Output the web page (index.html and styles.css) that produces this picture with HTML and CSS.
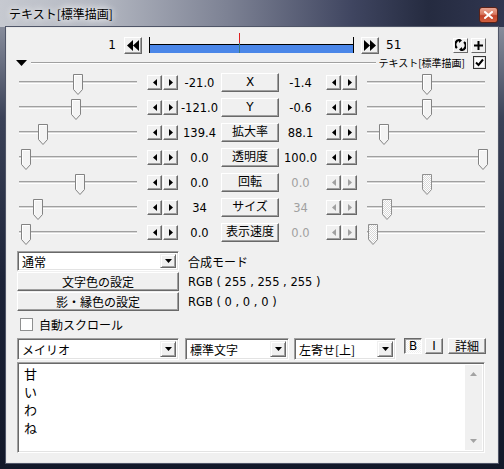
FILE: index.html
```html
<!DOCTYPE html>
<html lang="ja">
<head>
<meta charset="utf-8">
<title>テキスト[標準描画]</title>
<link rel="stylesheet" href="styles.css">
</head>
<body>
<div class="window">
  <div class="titlebar">
    <span class="title">テキスト[標準描画]</span>
    <span class="close">
      <svg width="9" height="8" viewBox="0 0 9 8"><path d="M1 1 L8 7 M8 1 L1 7" stroke="#fff" stroke-width="2" stroke-linecap="square"/></svg>
    </span>
  </div>
  <div class="client">
    <div class="timeline-row">
      <span class="fnum start">1</span>
      <span class="tbtn">
        <svg width="12" height="11" viewBox="0 0 12 11"><path d="M6 0 L0 5.5 L6 11 Z M12 0 L6 5.5 L12 11 Z" fill="#000"/></svg>
      </span>
      <div class="timeline">
        <div class="tl-bar"></div>
        <div class="tl-cursor" style="left:89px"></div>
      </div>
      <span class="tbtn">
        <svg width="12" height="11" viewBox="0 0 12 11"><path d="M0 0 L6 5.5 L0 11 Z M6 0 L12 5.5 L6 11 Z" fill="#000"/></svg>
      </span>
      <span class="fnum end">51</span>
      <span class="grow"></span>
      <span class="ibtn">
        <svg width="11" height="12" viewBox="0 0 11 12"><path d="M5 1 A4.5 4.5 0 0 0 2 9" stroke="#000" stroke-width="2.2" fill="none"/><path d="M6 11 A4.5 4.5 0 0 0 9 3" stroke="#000" stroke-width="2.2" fill="none"/><path d="M4 -1 L7 1.5 L4 4 Z" fill="#000"/><path d="M7 13 L4 10.5 L7 8 Z" fill="#000"/></svg>
      </span>
      <span class="ibtn">
        <svg width="11" height="11" viewBox="0 0 11 11"><path d="M5.5 1 V10 M1 5.5 H10" stroke="#000" stroke-width="2"/></svg>
      </span>
    </div>

    <div class="header-row">
      <svg class="tri" width="11" height="6" viewBox="0 0 11 6"><path d="M0 0 H11 L5.5 6 Z" fill="#000"/></svg>
      <span class="hline"></span>
      <span class="objname">テキスト[標準描画]</span>
      <span class="check on">
        <svg width="9" height="9" viewBox="0 0 9 9"><path d="M1 4.5 L3.5 7 L8 1.5" stroke="#000" stroke-width="2" fill="none"/></svg>
      </span>
    </div>

    <div class="params">
      <div class="prow">
        <div class="slider"><span class="track"></span><span class="thumb" style="left:60px"></span></div>
        <div class="spin"><span class="sbtn l"></span><span class="sbtn r"></span></div>
        <span class="val">-21.0</span>
        <span class="pbtn">X</span>
        <span class="val">-1.4</span>
        <div class="spin"><span class="sbtn l"></span><span class="sbtn r"></span></div>
        <div class="slider"><span class="track"></span><span class="thumb" style="left:61px"></span></div>
      </div>
      <div class="prow">
        <div class="slider"><span class="track"></span><span class="thumb" style="left:58px"></span></div>
        <div class="spin"><span class="sbtn l"></span><span class="sbtn r"></span></div>
        <span class="val">-121.0</span>
        <span class="pbtn">Y</span>
        <span class="val">-0.6</span>
        <div class="spin"><span class="sbtn l"></span><span class="sbtn r"></span></div>
        <div class="slider"><span class="track"></span><span class="thumb" style="left:61px"></span></div>
      </div>
      <div class="prow">
        <div class="slider"><span class="track"></span><span class="thumb" style="left:25px"></span></div>
        <div class="spin"><span class="sbtn l"></span><span class="sbtn r"></span></div>
        <span class="val">139.4</span>
        <span class="pbtn">拡大率</span>
        <span class="val">88.1</span>
        <div class="spin"><span class="sbtn l"></span><span class="sbtn r"></span></div>
        <div class="slider"><span class="track"></span><span class="thumb" style="left:18px"></span></div>
      </div>
      <div class="prow">
        <div class="slider"><span class="track"></span><span class="thumb" style="left:8px"></span></div>
        <div class="spin"><span class="sbtn l"></span><span class="sbtn r"></span></div>
        <span class="val">0.0</span>
        <span class="pbtn">透明度</span>
        <span class="val">100.0</span>
        <div class="spin"><span class="sbtn l"></span><span class="sbtn r"></span></div>
        <div class="slider"><span class="track"></span><span class="thumb" style="left:117px"></span></div>
      </div>
      <div class="prow">
        <div class="slider"><span class="track"></span><span class="thumb" style="left:62px"></span></div>
        <div class="spin"><span class="sbtn l"></span><span class="sbtn r"></span></div>
        <span class="val">0.0</span>
        <span class="pbtn">回転</span>
        <span class="val dis">0.0</span>
        <div class="spin dis"><span class="sbtn l"></span><span class="sbtn r"></span></div>
        <div class="slider dis"><span class="track"></span><span class="thumb" style="left:61px"></span></div>
      </div>
      <div class="prow">
        <div class="slider"><span class="track"></span><span class="thumb" style="left:20px"></span></div>
        <div class="spin"><span class="sbtn l"></span><span class="sbtn r"></span></div>
        <span class="val">34</span>
        <span class="pbtn">サイズ</span>
        <span class="val dis">34</span>
        <div class="spin dis"><span class="sbtn l"></span><span class="sbtn r"></span></div>
        <div class="slider dis"><span class="track"></span><span class="thumb" style="left:21px"></span></div>
      </div>
      <div class="prow">
        <div class="slider"><span class="track"></span><span class="thumb" style="left:8px"></span></div>
        <div class="spin"><span class="sbtn l"></span><span class="sbtn r"></span></div>
        <span class="val">0.0</span>
        <span class="pbtn">表示速度</span>
        <span class="val dis">0.0</span>
        <div class="spin dis"><span class="sbtn l"></span><span class="sbtn r"></span></div>
        <div class="slider dis"><span class="track"></span><span class="thumb" style="left:7px"></span></div>
      </div>
    </div>

    <div class="lower">
      <div class="lrow r-blend">
        <div class="combo w162"><span class="ctext">通常</span><span class="carrow"></span></div>
        <span class="label jp">合成モード</span>
      </div>
      <div class="lrow r-color">
        <span class="wbtn">文字色の設定</span>
        <span class="label">RGB ( 255 , 255 , 255 )</span>
      </div>
      <div class="lrow r-color">
        <span class="wbtn">影・縁色の設定</span>
        <span class="label">RGB ( 0 , 0 , 0 )</span>
      </div>
      <div class="lrow r-auto">
        <span class="check"></span>
        <span class="label jp">自動スクロール</span>
      </div>
      <div class="lrow r-font">
        <div class="combo big w162"><span class="ctext">メイリオ</span><span class="carrow"></span></div>
        <div class="combo big w104"><span class="ctext">標準文字</span><span class="carrow"></span></div>
        <div class="combo big w102"><span class="ctext">左寄せ[上]</span><span class="carrow"></span></div>
        <span class="sq pressed">B</span>
        <span class="sq">I</span>
        <span class="sq wide">詳細</span>
      </div>
      <div class="textbox">
        <div class="tlines">
          <div>甘</div>
          <div>い</div>
          <div>わ</div>
          <div>ね</div>
        </div>
        <div class="vscroll">
          <svg width="7" height="4" viewBox="0 0 7 4"><path d="M0 4 L3.5 0 L7 4 Z" fill="#a3a3a3"/></svg>
          <svg width="7" height="4" viewBox="0 0 7 4"><path d="M0 0 L3.5 4 L7 0 Z" fill="#a3a3a3"/></svg>
        </div>
      </div>
    </div>
  </div>
</div>
</body>
</html>
```

FILE: styles.css
```css
html, body {
  margin: 0;
  padding: 0;
}
body {
  width: 504px;
  height: 469px;
  overflow: hidden;
  font-family: "DejaVu Sans", "Noto Sans CJK JP", sans-serif;
  font-size: 11px;
  color: #000;
}
.window {
  width: 504px;
  height: 469px;
  box-sizing: border-box;
  display: flex;
  flex-direction: column;
  background: linear-gradient(to bottom, #9ea3b0 0%, #3b4258 25%, #1c2338 60%, #121829 100%);
}
.titlebar {
  height: 27px;
  flex: none;
  display: flex;
  align-items: flex-start;
  justify-content: space-between;
  background: linear-gradient(to right, #c6c9d0 0%, #b3b7c1 20%, #7d8294 45%, #3f4560 70%, #252b40 85%, #303650 100%);
}
.title {
  font-family: "Noto Sans CJK JP", sans-serif;
  font-size: 12px;
  line-height: 16px;
  margin: 6px 0 0 7px;
  padding: 0 2px;
  color: #000;
  text-shadow: 0 0 6px #fff, 0 0 10px #fff;
}
.close {
  width: 19px;
  height: 16px;
  margin: 7px 6px 0 0;
  box-sizing: border-box;
  border: 1px solid #5a2218;
  border-radius: 3px;
  background: linear-gradient(to bottom, #e9a592 0%, #d9775f 45%, #c2422a 55%, #d0603f 100%);
  display: flex;
  align-items: center;
  justify-content: center;
}
.client {
  flex: none;
  margin: 0 6px;
  height: 436px;
  box-sizing: border-box;
  border: 1px solid #e8e8e8;
  outline: 1px solid #505668;
  background: #f0f0f0;
  display: flex;
  flex-direction: column;
}

/* timeline row */
.timeline-row {
  height: 18px;
  margin-top: 8px;
  display: flex;
  align-items: center;
}
.fnum {
  font-size: 12px;
}
.fnum.start {
  width: 109px;
  text-align: right;
  margin-right: 8px;
}
.fnum.end {
  margin-left: 7px;
}
.tbtn {
  width: 18px;
  height: 17px;
  box-sizing: border-box;
  border: 1px solid;
  border-color: #fff #696969 #696969 #fff;
  box-shadow: inset -1px -1px 0 #a0a0a0;
  background: #f0f0f0;
  display: flex;
  align-items: center;
  justify-content: center;
}
.timeline {
  width: 205px;
  height: 16px;
  margin: 0 7px 0 7px;
  box-sizing: border-box;
  border-left: 1px solid #000;
  border-right: 1px solid #000;
  position: relative;
  display: flex;
  flex-direction: column;
  justify-content: flex-end;
}
.tl-bar {
  height: 8px;
  border-top: 1px solid #000;
  background: #4a86e8;
}
.tl-cursor {
  position: absolute;
  top: -4px;
  bottom: 0;
  width: 1px;
  background: linear-gradient(to bottom, #e02020 0, #e02020 10px, #3a7a80 10px);
}
.grow {
  flex: 1;
}
.ibtn {
  width: 15px;
  height: 15px;
  box-sizing: border-box;
  border: 1px solid;
  border-color: #fff #696969 #696969 #fff;
  background: #f0f0f0;
  display: flex;
  align-items: center;
  justify-content: center;
  margin-right: 3px;
}
.ibtn:last-child {
  margin-right: 11px;
}

/* header row */
.header-row {
  height: 15px;
  margin-top: 1px;
  display: flex;
  align-items: center;
}
.tri {
  margin-left: 9px;
  flex: none;
}
.hline {
  flex: 1;
  height: 0;
  border-top: 1px solid #a0a0a0;
  border-bottom: 1px solid #fff;
  margin: 0 3px 0 4px;
}
.objname {
  font-family: "Noto Sans CJK JP", sans-serif;
  font-size: 10px;
  line-height: 12px;
  margin-right: 8px;
}
.check {
  width: 13px;
  height: 13px;
  box-sizing: border-box;
  border: 1px solid #8e8f8f;
  background: #fff;
  box-shadow: inset 0 0 0 1px #e0e0e0;
  display: flex;
  align-items: center;
  justify-content: center;
  flex: none;
}
.header-row .check {
  margin-right: 11px;
  border-color: #333;
}

/* parameter rows */
.params {
  display: flex;
  flex-direction: column;
  margin-top: 0;
}
.prow {
  height: 25px;
  display: flex;
  align-items: center;
}
.slider {
  width: 130px;
  height: 25px;
  box-sizing: border-box;
  padding: 0 6px;
  display: flex;
  align-items: center;
  position: relative;
  flex: none;
}
.prow > .slider:first-child {
  margin-left: 6px;
}
.track {
  flex: 1;
  height: 1px;
  border-top: 1px solid #a0a0a0;
  border-bottom: 1px solid #fff;
  background: #d8d8d8;
}
.thumb {
  position: absolute;
  top: 4px;
  width: 10px;
  height: 21px;
  background: no-repeat url("data:image/svg+xml,%3Csvg xmlns='http://www.w3.org/2000/svg' width='10' height='21'%3E%3Cpath d='M0.5 0.5 H9.5 V15.5 L5 20.5 L0.5 15.5 Z' fill='%23f4f4f4' stroke='%23838383'/%3E%3Cpath d='M1.5 1.5 V15 M1.5 1.5 H8.5' stroke='%23fff' fill='none'/%3E%3C/svg%3E");
}
.slider.dis .thumb {
  background: no-repeat url("data:image/svg+xml,%3Csvg xmlns='http://www.w3.org/2000/svg' width='10' height='21'%3E%3Cdefs%3E%3Cpattern id='p' width='2' height='2' patternUnits='userSpaceOnUse'%3E%3Crect width='2' height='2' fill='%23fff'/%3E%3Crect width='1' height='1' fill='%23d8d8d8'/%3E%3Crect x='1' y='1' width='1' height='1' fill='%23d8d8d8'/%3E%3C/pattern%3E%3C/defs%3E%3Cpath d='M0.5 0.5 H9.5 V15.5 L5 20.5 L0.5 15.5 Z' fill='url(%23p)' stroke='%23909090'/%3E%3C/svg%3E");
}
.spin {
  display: flex;
  gap: 1px;
  margin-left: 4px;
  flex: none;
}
.sbtn {
  width: 15px;
  height: 15px;
  box-sizing: border-box;
  border: 1px solid;
  border-color: #fff #696969 #696969 #fff;
  box-shadow: inset -1px -1px 0 #a0a0a0;
  background: #f0f0f0 no-repeat center;
}
.sbtn.l {
  background-image: url("data:image/svg+xml,%3Csvg xmlns='http://www.w3.org/2000/svg' width='4' height='7'%3E%3Cpath d='M4 0 L0 3.5 L4 7 Z' fill='%23000'/%3E%3C/svg%3E");
}
.sbtn.r {
  background-image: url("data:image/svg+xml,%3Csvg xmlns='http://www.w3.org/2000/svg' width='4' height='7'%3E%3Cpath d='M0 0 L4 3.5 L0 7 Z' fill='%23000'/%3E%3C/svg%3E");
}
.spin.dis .sbtn.l {
  background-image: url("data:image/svg+xml,%3Csvg xmlns='http://www.w3.org/2000/svg' width='4' height='7'%3E%3Cpath d='M4 0 L0 3.5 L4 7 Z' fill='%23a0a0a0'/%3E%3C/svg%3E");
}
.spin.dis .sbtn.r {
  background-image: url("data:image/svg+xml,%3Csvg xmlns='http://www.w3.org/2000/svg' width='4' height='7'%3E%3Cpath d='M0 0 L4 3.5 L0 7 Z' fill='%23a0a0a0'/%3E%3C/svg%3E");
}
.val {
  width: 43px;
  text-align: center;
  font-size: 11.5px;
  flex: none;
}
.val.dis {
  color: #a0a0a0;
}
.pbtn {
  width: 58px;
  height: 19px;
  box-sizing: border-box;
  border: 1px solid;
  border-color: #fff #696969 #696969 #fff;
  box-shadow: inset -1px -1px 0 #a0a0a0;
  background: #f0f0f0;
  font-family: "DejaVu Sans", "Noto Sans CJK JP", sans-serif;
  font-size: 12px;
  line-height: 17px;
  text-align: center;
  flex: none;
}
.prow > .val:nth-of-type(2) {
  width: 42px;
}
.prow > .slider:last-child {
  margin-left: 4px;
}

/* lower section */
.lower {
  display: flex;
  flex-direction: column;
  margin-top: 6px;
  padding-left: 10px;
  font-family: "Noto Sans CJK JP", sans-serif;
}
.lrow {
  display: flex;
  align-items: center;
}
.label {
  font-size: 11.5px;
  margin-left: 9px;
  font-family: "DejaVu Sans", "Noto Sans CJK JP", sans-serif;
}
.label.jp {
  font-family: "Noto Sans CJK JP", sans-serif;
  font-size: 12px;
}
.r-blend {
  height: 20px;
}
.r-color {
  height: 19px;
  margin-top: 1px;
}
.combo {
  height: 20px;
  box-sizing: border-box;
  border: 1px solid;
  border-color: #a0a0a0 #fff #fff #a0a0a0;
  box-shadow: inset 1px 1px 0 #696969, inset -1px -1px 0 #e3e3e3;
  background: #fff;
  display: flex;
  align-items: center;
  padding: 2px;
  flex: none;
}
.combo.big {
  height: 22px;
}
.w162 { width: 162px; }
.w104 { width: 104px; }
.w102 { width: 102px; }
.ctext {
  flex: 1;
  font-size: 12px;
  padding-left: 2px;
  white-space: nowrap;
}
.carrow {
  width: 16px;
  align-self: stretch;
  box-sizing: border-box;
  border: 1px solid;
  border-color: #f0f0f0 #696969 #696969 #f0f0f0;
  box-shadow: inset 1px 1px 0 #fff, inset -1px -1px 0 #a0a0a0;
  background: #f0f0f0 no-repeat center url("data:image/svg+xml,%3Csvg xmlns='http://www.w3.org/2000/svg' width='7' height='4'%3E%3Cpath d='M0 0 H7 L3.5 4 Z' fill='%23000'/%3E%3C/svg%3E");
}
.wbtn {
  width: 162px;
  height: 19px;
  box-sizing: border-box;
  border: 1px solid;
  border-color: #fff #696969 #696969 #fff;
  box-shadow: inset -1px -1px 0 #a0a0a0;
  background: #f0f0f0;
  font-size: 12px;
  line-height: 17px;
  text-align: center;
  flex: none;
}
.r-auto {
  height: 18px;
  margin-top: 4px;
  padding-left: 3px;
}
.r-auto .label {
  margin-left: 6px;
}
.r-auto .check {
  border-color: #8e8f8f;
  box-shadow: none;
}
.r-font {
  height: 22px;
  margin-top: 5px;
  gap: 0;
}
.r-font .combo + .combo {
  margin-left: 6px;
}
.r-font .combo:nth-child(3) {
  margin-left: 5px;
}
.sq {
  width: 18px;
  height: 16px;
  box-sizing: border-box;
  border: 1px solid;
  border-color: #fff #696969 #696969 #fff;
  box-shadow: inset -1px -1px 0 #a0a0a0;
  background: #f0f0f0;
  font-family: "DejaVu Sans", "Noto Sans CJK JP", sans-serif;
  font-size: 12px;
  line-height: 14px;
  text-align: center;
  margin-left: 3px;
  align-self: flex-start;
  flex: none;
}
.sq.pressed {
  margin-left: 8px;
  border-color: #696969 #fff #fff #696969;
  box-shadow: inset 1px 1px 0 #a0a0a0;
  background: repeating-conic-gradient(#fff 0 25%, #f0f0f0 0 50%) 0 0 / 2px 2px;
}
.sq.wide {
  width: 38px;
  margin-left: 5px;
  font-family: "Noto Sans CJK JP", sans-serif;
}
.textbox {
  width: 468px;
  height: 91px;
  margin-top: 2px;
  box-sizing: border-box;
  border: 1px solid;
  border-color: #a0a0a0 #fff #fff #a0a0a0;
  box-shadow: inset 1px 1px 0 #696969, inset -1px -1px 0 #e3e3e3;
  background: #fff;
  display: flex;
  padding: 2px;
}
.tlines {
  flex: 1;
  padding: 0 0 0 4px;
  font-size: 13px;
  line-height: 18px;
}
.vscroll {
  width: 17px;
  background: #f0f0f0;
  display: flex;
  flex-direction: column;
  justify-content: space-between;
  align-items: center;
  padding: 7px 0 7px;
  box-sizing: border-box;
}
```
